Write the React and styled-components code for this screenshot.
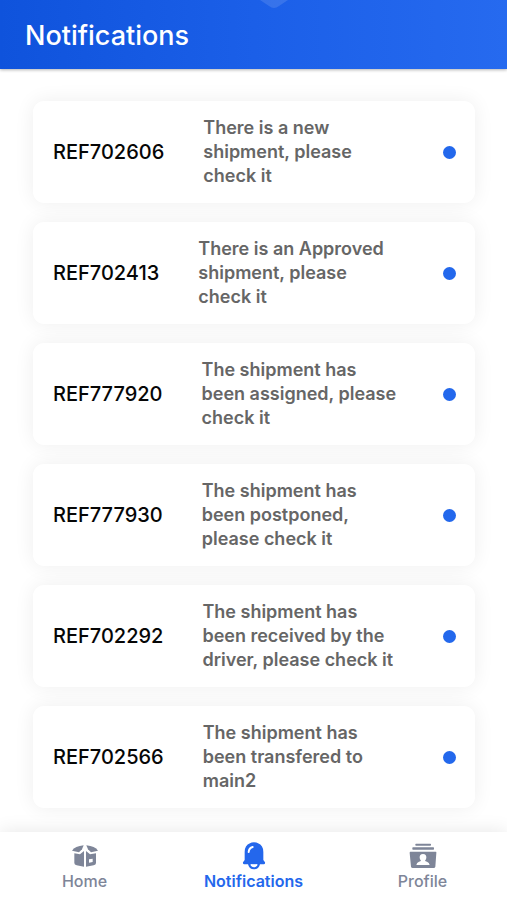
import React from 'react'
import styled, { createGlobalStyle } from 'styled-components'

const GlobalStyle = createGlobalStyle`
  * {
    box-sizing: border-box;
  }

  body {
    margin: 0;
    background: #fff;
    font-family: Inter, "Liberation Sans", sans-serif;
  }
`

const Screen = styled.div`
  display: flex;
  flex-direction: column;
  height: 100vh;
  overflow: hidden;
`

const Header = styled.header`
  display: flex;
  justify-content: center;
  position: relative;
  z-index: 1;
  flex: none;
  background: linear-gradient(90deg, #0f53dc, #1b5fe8 50%, #266aef);
  box-shadow: 0 1px 3px rgba(0, 0, 0, 0.3);
`

const Title = styled.h1`
  flex: 1;
  margin: 0;
  padding: 20px 25px 17px;
  color: #fff;
  font-size: 27px;
  font-weight: 500;
  line-height: 32px;
`

const Notch = styled.svg`
  position: absolute;
  top: 0;
  left: 50%;
  margin-left: 5px;
  width: 30px;
  height: 8px;
`

const List = styled.ul`
  display: flex;
  flex-direction: column;
  flex: 1;
  gap: 19px;
  min-height: 0;
  margin: 0;
  padding: 32px 32px 24px 33px;
  overflow: hidden;
  list-style: none;
`

const Card = styled.li`
  display: flex;
  align-items: center;
  flex: none;
  gap: 39px;
  padding: 15px 19px 15px 20px;
  border-radius: 11px;
  background: #fff;
  box-shadow: 0 0 20px rgba(0, 0, 0, 0.07);
`

const Reference = styled.strong`
  color: #060606;
  font-size: 20px;
  font-weight: 500;
  line-height: 24px;
`

const Message = styled.p`
  flex: 1;
  margin: 0;
  color: #666;
  font-size: 18px;
  font-weight: 600;
  line-height: 24px;
  white-space: pre-line;
`

const Dot = styled.span`
  flex: none;
  width: 13px;
  height: 13px;
  border-radius: 50%;
  background: #2368ec;
`

const TabBar = styled.nav`
  display: grid;
  grid-template-columns: repeat(3, 1fr);
  position: relative;
  flex: none;
  height: 68px;
  background: #fff;
  box-shadow: 0 0 18px rgba(0, 0, 0, 0.1);
`

const Tab = styled.a`
  display: flex;
  flex-direction: column;
  align-items: center;
  padding-top: 10px;
  color: ${props => (props.$active ? '#2467ec' : '#7e8598')};
  font-size: 16px;
  font-weight: ${props => (props.$active ? 600 : 500)};
  line-height: 20px;
  text-decoration: none;

  svg {
    width: 28px;
    height: 28px;
    margin-bottom: 1px;
    fill: currentColor;
  }
`

const BoxIcon = () => (
  <svg viewBox="0 0 84 84" aria-hidden="true">
    <path d="M38 10 L33 22 L24 31 L3 26 Q12 13 38 10 Z" />
    <path d="M46 10 Q72 13 81 26 L60 31 L51 22 Z" />
    <path d="M10 34 L27 37 L39 27 V74 L17 70 Q10 69 10 63 Z" />
    <path
      fillRule="evenodd"
      d="M45 27 L57 37 L75 34 V63 Q75 69 68 70 L45 74 Z M54 52 V62 L65 60 V50 Z"
    />
  </svg>
)

const BellIcon = () => (
  <svg viewBox="0 0 84 84" aria-hidden="true">
    <path d="M42 1 Q50 1 54 4 Q70 10 70 30 V54 L75 61 Q76 67 71 67 H13 Q8 67 9 61 L14 54 V30 Q14 10 30 4 Q34 1 42 1 Z" />
    <path d="M24 66 H31 Q34 76 42 76 Q50 76 53 66 H60 Q57 82 42 82 Q27 82 24 66 Z" />
    <path d="M26 30 Q27 18 38 15" fill="none" stroke="#fff" strokeWidth="6" strokeLinecap="round" />
    <path d="M33 69 Q42 73 51 69" fill="none" stroke="#fff" strokeWidth="5" />
  </svg>
)

const ContactsIcon = () => (
  <svg viewBox="0 0 84 84" aria-hidden="true">
    <rect x="19" y="5" width="47" height="6" rx="2" />
    <rect x="10" y="16" width="65" height="7" rx="2" />
    <path d="M4 29 H80 Q83 29 82 33 L79 74 Q78 78 74 78 H11 Q7 78 6 74 L2 33 Q2 29 4 29 Z" />
    <path
      fill="#fff"
      d="M42 36 C49 36 53 41 52 48 Q51 53 48 56 Q49 58 54 59 Q61 61 62 69 H22 Q23 61 30 59 Q35 58 36 56 Q33 53 32 48 C31 41 35 36 42 36 Z"
    />
  </svg>
)

const notifications = [
  { id: 'REF702606', text: 'There is a new\nshipment, please\ncheck it' },
  { id: 'REF702413', text: 'There is an Approved\nshipment, please\ncheck it' },
  { id: 'REF777920', text: 'The shipment has\nbeen assigned, please\ncheck it' },
  { id: 'REF777930', text: 'The shipment has\nbeen postponed,\nplease check it' },
  { id: 'REF702292', text: 'The shipment has\nbeen received by the\ndriver, please check it' },
  { id: 'REF702566', text: 'The shipment has\nbeen transfered to\nmain2' },
]

const App = () => (
  <Screen>
    <GlobalStyle />
    <Header>
      <Title>Notifications</Title>
      <Notch viewBox="0 0 30 8" aria-hidden="true">
        <path d="M1 0 H29 L20 6 Q15 10 10 6 Z" fill="#fff" fillOpacity="0.12" />
      </Notch>
    </Header>

    <List>
      {notifications.map(item => (
        <Card key={item.id}>
          <Reference>{item.id}</Reference>
          <Message>{item.text}</Message>
          <Dot />
        </Card>
      ))}
    </List>

    <TabBar>
      <Tab href="#home">
        <BoxIcon />
        Home
      </Tab>
      <Tab href="#notifications" $active aria-current="page">
        <BellIcon />
        Notifications
      </Tab>
      <Tab href="#profile">
        <ContactsIcon />
        Profile
      </Tab>
    </TabBar>
  </Screen>
)

export default App
